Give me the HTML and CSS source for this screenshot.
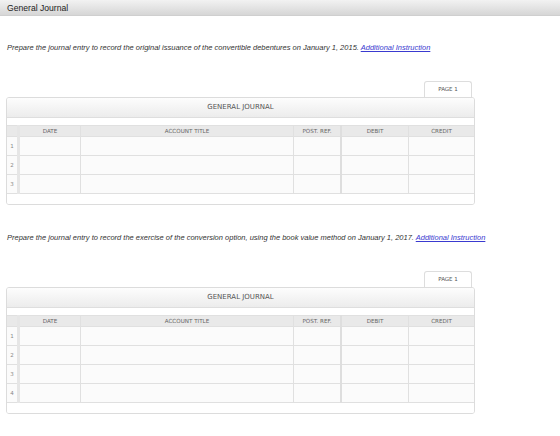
FILE: index.html
```html
<!DOCTYPE html>
<html lang="en">
<head>
    <meta charset="UTF-8">
    <meta name="viewport" content="width=device-width, initial-scale=1.0">
    <title>General Journal</title>
    <link rel="stylesheet" href="styles.css">
</head>
<body>
    <div class="topbar">General Journal</div>

    <!-- Del 1 -->
    <p class="prompt first">Prepare the journal entry to record the original issuance of the convertible debentures on January 1, 2015. <a href="#">Additional Instruction</a></p>
    <div class="journal">
        <div class="tabs"><span class="tab">PAGE 1</span></div>
        <div class="box">
            <div class="band">GENERAL JOURNAL</div>
            <table class="grid">
                <tr class="head">
                    <th class="num"></th><th class="date">DATE</th><th class="acct">ACCOUNT TITLE</th><th class="ref">POST. REF.</th><th class="debit">DEBIT</th><th class="credit">CREDIT</th>
                </tr>
                <tr><td class="num">1</td><td></td><td></td><td class="ref"></td><td></td><td></td></tr>
                <tr><td class="num">2</td><td></td><td></td><td class="ref"></td><td></td><td></td></tr>
                <tr><td class="num">3</td><td></td><td></td><td class="ref"></td><td></td><td></td></tr>
            </table>
            <div class="foot"></div>
        </div>
    </div>

    <!-- Del 2 -->
    <p class="prompt">Prepare the journal entry to record the exercise of the conversion option, using the book value method on January 1, 2017. <a href="#">Additional Instruction</a></p>
    <div class="journal">
        <div class="tabs"><span class="tab">PAGE 1</span></div>
        <div class="box">
            <div class="band">GENERAL JOURNAL</div>
            <table class="grid">
                <tr class="head">
                    <th class="num"></th><th class="date">DATE</th><th class="acct">ACCOUNT TITLE</th><th class="ref">POST. REF.</th><th class="debit">DEBIT</th><th class="credit">CREDIT</th>
                </tr>
                <tr><td class="num">1</td><td></td><td></td><td class="ref"></td><td></td><td></td></tr>
                <tr><td class="num">2</td><td></td><td></td><td class="ref"></td><td></td><td></td></tr>
                <tr><td class="num">3</td><td></td><td></td><td class="ref"></td><td></td><td></td></tr>
                <tr><td class="num">4</td><td></td><td></td><td class="ref"></td><td></td><td></td></tr>
            </table>
            <div class="foot"></div>
        </div>
    </div>
</body>
</html>
```

FILE: styles.css
```css
body {
    margin: 0;
    padding: 0;
    font-family: "Liberation Sans", Arial, sans-serif;
    background: white;
    color: #333;
}
.topbar {
    height: 16px;
    line-height: 16px;
    padding-left: 7px;
    font-size: 8.6px;
    color: #222;
    background: linear-gradient(#f2f2f2, #d6d6d6);
    border-bottom: 1px solid #cfcfcf;
    box-sizing: border-box;
}
.prompt {
    margin: 28px 0 0 7px;
    font-size: 7.5px;
    line-height: 9px;
    font-style: italic;
    color: #333;
}
.prompt.first {
    margin-top: 27px;
}
.prompt a {
    color: #3a3ad0;
    text-decoration: underline;
}
.journal {
    width: 469px;
    margin: 29px 0 0 6px;
    font-family: "DejaVu Sans", Verdana, sans-serif;
}
.tabs {
    display: flex;
    justify-content: flex-end;
    padding-right: 3px;
}
.tab {
    width: 48px;
    height: 16px;
    line-height: 15px;
    box-sizing: border-box;
    text-align: center;
    font-size: 5.5px;
    color: #555;
    background: white;
    border: 1px solid #ddd;
    border-bottom: none;
    border-radius: 3px 3px 0 0;
}
.box {
    border: 1px solid #dcdcdc;
    border-radius: 3px;
    overflow: hidden;
    background: white;
}
.band {
    height: 19px;
    line-height: 19px;
    text-align: center;
    font-size: 7px;
    color: #555;
    background: linear-gradient(#fdfdfd, #ececec);
    border-bottom: 1px solid #dedede;
    margin-bottom: 7px;
}
.grid {
    width: 100%;
    border-collapse: collapse;
    table-layout: fixed;
}
.grid th, .grid td {
    padding: 0;
    border: 1px solid #e0e0e0;
    background: #fbfbfb;
}
.grid tr > :first-child {
    border-left: none;
}
.grid tr > :last-child {
    border-right: none;
}
.grid th {
    height: 10px;
    font-size: 5.6px;
    line-height: 10px;
    font-weight: normal;
    color: #666;
    background: #e9e9e9;
}
.grid td {
    height: 18px;
}
.grid .num {
    width: 10px;
    border-right: 3px solid #e6e6e6;
    font-size: 5.5px;
    color: #888;
    text-align: center;
}
.grid .date {
    width: 60px;
}
.grid .acct {
    width: 212px;
}
.grid .ref {
    width: 46px;
    border-right: 2px solid #dedede;
}
.grid .debit {
    width: 66px;
}
.foot {
    height: 10px;
    background: white;
}
```
